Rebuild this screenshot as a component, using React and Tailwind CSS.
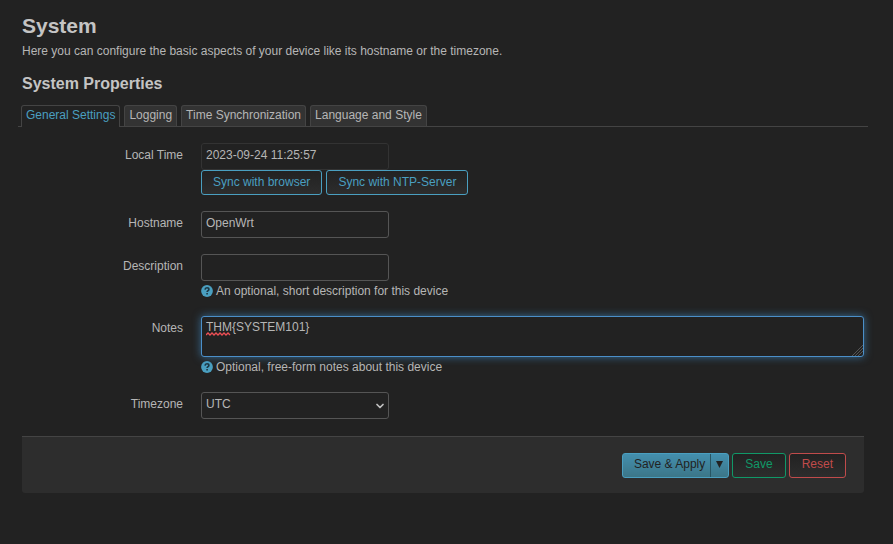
import React, { useState } from "react";
import { ChevronDown } from "lucide-react";

const TABS = ["General Settings", "Logging", "Time Synchronization", "Language and Style"];

const control =
  "block h-[27px] w-[188px] rounded-[3px] border bg-[#222] pl-1 pr-1 pb-[3px] text-[12px] leading-4 text-[#b6b6b6] outline-none";
const outlineButton =
  "h-[25px] rounded-[3px] border bg-linear-to-b from-[#222] to-[#2d2d2d] pb-0.5 text-[12px] leading-4";

function Row({ id, label, children }) {
  return (
    <div className="flex items-start gap-[18px]">
      <label htmlFor={id} className="w-[161px] shrink-0 pt-1 text-right">
        {label}
      </label>
      <div className="min-w-0 flex-1">{children}</div>
    </div>
  );
}

function Help({ id, children }) {
  return (
    <p id={id} className="flex h-[19px] items-center gap-[3px]">
      <svg className="h-3 w-3 shrink-0" viewBox="0 0 12 12" aria-hidden="true">
        <circle cx="6" cy="6" r="5.9" fill="#4a9fc0" />
        <path
          d="M4 4.6C4.1 3.4 4.9 2.8 6 2.8c1.1 0 1.9.6 1.9 1.6C7.9 5.6 6.1 5.6 6.1 7.1M6.1 8v1.6"
          fill="none"
          stroke="#1d3642"
          strokeWidth="1.6"
        />
      </svg>
      {children}
    </p>
  );
}

export default function App() {
  const [tab, setTab] = useState(TABS[0]);
  return (
    <main className="min-h-screen bg-[#222] pt-3.5 pr-[29px] pb-12 pl-[22px] font-['Liberation_Sans',Arial,sans-serif] text-[12px] leading-4 text-[#b6b6b6]">
      <h1 className="text-[21px] leading-6 font-bold text-[#c4c4c4]">System</h1>
      <p className="mt-[5px]">
        Here you can configure the basic aspects of your device like its hostname or the timezone.
      </p>
      <h2 className="mt-[15px] text-[16px] leading-5 font-bold text-[#c4c4c4]">System Properties</h2>

      <div role="tablist" className="-mx-1 mt-[11px] flex gap-1 border-b border-[#444] pl-[3px]">
        {TABS.map((name) => (
          <button
            key={name}
            type="button"
            role="tab"
            aria-selected={tab === name}
            onClick={() => setTab(name)}
            className={
              tab === name
                ? "-mb-px h-[22px] rounded-t-[3px] border border-b-0 border-[#444] bg-[#222] px-1 pb-[3px] text-[#4a9fc0]"
                : "h-[21px] rounded-t-[3px] border border-b-0 border-[#444] bg-[#333] px-1 pb-0.5"
            }
          >
            {name}
          </button>
        ))}
      </div>

      <form onSubmit={(e) => e.preventDefault()}>
        <div className="flex flex-col gap-4 pt-4 pb-[17px]">
          <Row id="time" label="Local Time">
            <input id="time" readOnly defaultValue="2023-09-24 11:25:57" className={control + " border-[#333]"} />
            <div className="flex gap-1">
              <button type="button" className={outlineButton + " border-[#4a9fc0] px-[11px] text-[#4a9fc0]"}>
                Sync with browser
              </button>
              <button type="button" className={outlineButton + " border-[#4a9fc0] px-[11px] text-[#4a9fc0]"}>
                Sync with NTP-Server
              </button>
            </div>
          </Row>
          <Row id="hostname" label="Hostname">
            <input id="hostname" defaultValue="OpenWrt" className={control + " border-[#555]"} />
          </Row>
          <Row id="description" label="Description">
            <input
              id="description"
              aria-describedby="description-help"
              className={control + " border-[#555]"}
            />
            <Help id="description-help">An optional, short description for this device</Help>
          </Row>
          <Row id="notes" label="Notes">
            <div className="relative">
              <textarea
                id="notes"
                spellCheck={false}
                aria-describedby="notes-help"
                defaultValue="THM{SYSTEM101}"
                className="block h-[41px] w-full resize-y rounded-[3px] border border-[#4b8fc9] bg-[#222] px-1 pt-0.5 text-[12px] leading-4 text-[#b6b6b6] shadow-[0_0_8px_#3f84b8c0] outline-none [&::-webkit-resizer]:bg-[linear-gradient(135deg,transparent_62%,#555_62%_66%,transparent_66%_72%,#555_72%_76%,transparent_76%_82%,#555_82%_86%,transparent_86%)]"
              />
              <svg
                className="pointer-events-none absolute top-4 left-[5px] h-1 w-[26px]"
                viewBox="0 0 26 4"
                aria-hidden="true"
              >
                <path
                  d="M0 3l2-2 2 2 2-2 2 2 2-2 2 2 2-2 2 2 2-2 2 2 2-2 2 2"
                  fill="none"
                  stroke="#ee4f55"
                  strokeWidth="1.3"
                />
              </svg>
            </div>
            <Help id="notes-help">Optional, free-form notes about this device</Help>
          </Row>
          <Row id="timezone" label="Timezone">
            <div className="relative w-[188px]">
              <select id="timezone" className={control + " appearance-none border-[#555]"}>
                <option>UTC</option>
              </select>
              <ChevronDown
                className="pointer-events-none absolute top-2 right-[3px] h-3 w-3 text-[#c0c0c0]"
                strokeWidth={3.5}
                aria-hidden="true"
              />
            </div>
          </Row>
        </div>

        <div className="flex h-[57px] items-center justify-end gap-[3px] rounded-b-[3px] border-t border-[#444] bg-[#2d2d2d] pr-[18px]">
          <div className="flex h-[25px] overflow-hidden rounded-[3px] border border-[#4a9fc0] bg-linear-to-b from-[#438fae] to-[#3c7688] text-[#222]">
            <button type="button" className="border-r border-[#285563] pr-[5px] pb-0.5 pl-[11px]">
              Save &amp; Apply
            </button>
            <button type="button" aria-label="More apply options" className="flex w-[17px] items-center justify-center pb-0.5">
              <svg className="h-[7px] w-[7px]" viewBox="0 0 7 7" fill="currentColor" aria-hidden="true">
                <path d="M0 0h7L3.5 7z" />
              </svg>
            </button>
          </div>
          <button type="button" className={outlineButton + " border-[#109868] px-3 text-[#109868]"}>
            Save
          </button>
          <button type="button" className={outlineButton + " border-[#c04b4b] px-3 text-[#c04b4b]"}>
            Reset
          </button>
        </div>
      </form>
    </main>
  );
}
